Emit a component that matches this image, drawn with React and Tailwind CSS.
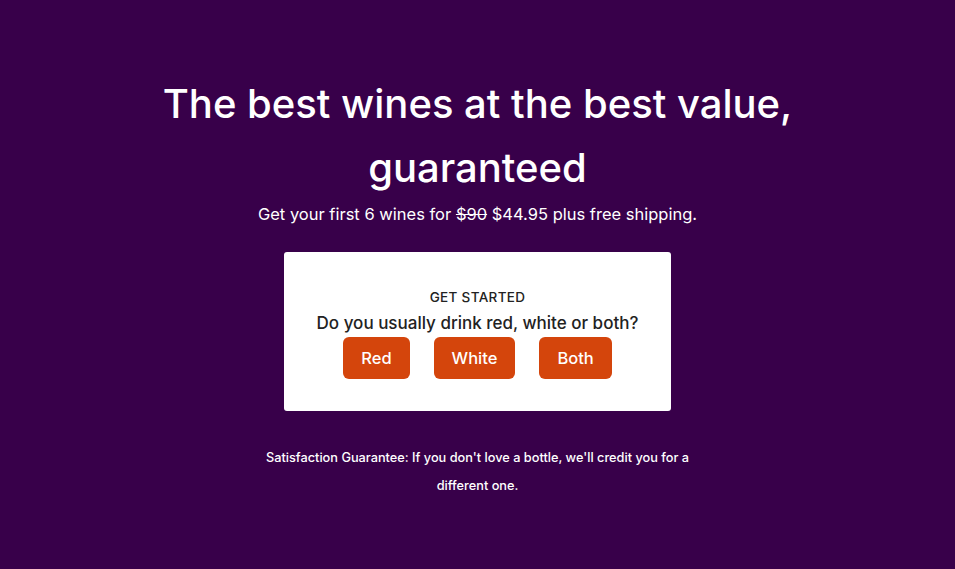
export default function App() {
  const options = ["Red", "White", "Both"]

  return (
    <div className="min-h-screen bg-[#38004a] text-white font-['Inter',sans-serif] flex flex-col items-center pt-[72px]">
      <h1 className="text-[40px] leading-[64px] font-medium text-center max-w-[660px]">
        The best wines at the best value, guaranteed
      </h1>
      <p className="text-[16.5px] leading-6 mt-[2px] text-white">
        Get your first 6 wines for <span className="line-through">$90</span> $44.95 plus free shipping.
      </p>

      {/* Quiz card */}
      <div className="mt-[26px] w-[387px] h-[159px] bg-white rounded-[3px] text-[#222] flex flex-col items-center pt-[37px]">
        <div className="text-[13.5px] leading-4 font-medium tracking-wide">GET STARTED</div>
        <div className="text-[17px] leading-5 font-medium mt-[8px]">Do you usually drink red, white or both?</div>
        <div className="flex gap-6 mt-[4px]">
          {options.map((opt) => (
            <button
              key={opt}
              className="h-[42px] px-[18px] rounded-[6px] bg-[#d4450c] text-white text-[16.5px] font-medium"
            >
              {opt}
            </button>
          ))}
        </div>
      </div>

      <p className="mt-[33px] w-[460px] text-center text-[12.75px] leading-[28px] font-medium">
        Satisfaction Guarantee: If you don't love a bottle, we'll credit you for a different one.
      </p>
    </div>
  )
}
